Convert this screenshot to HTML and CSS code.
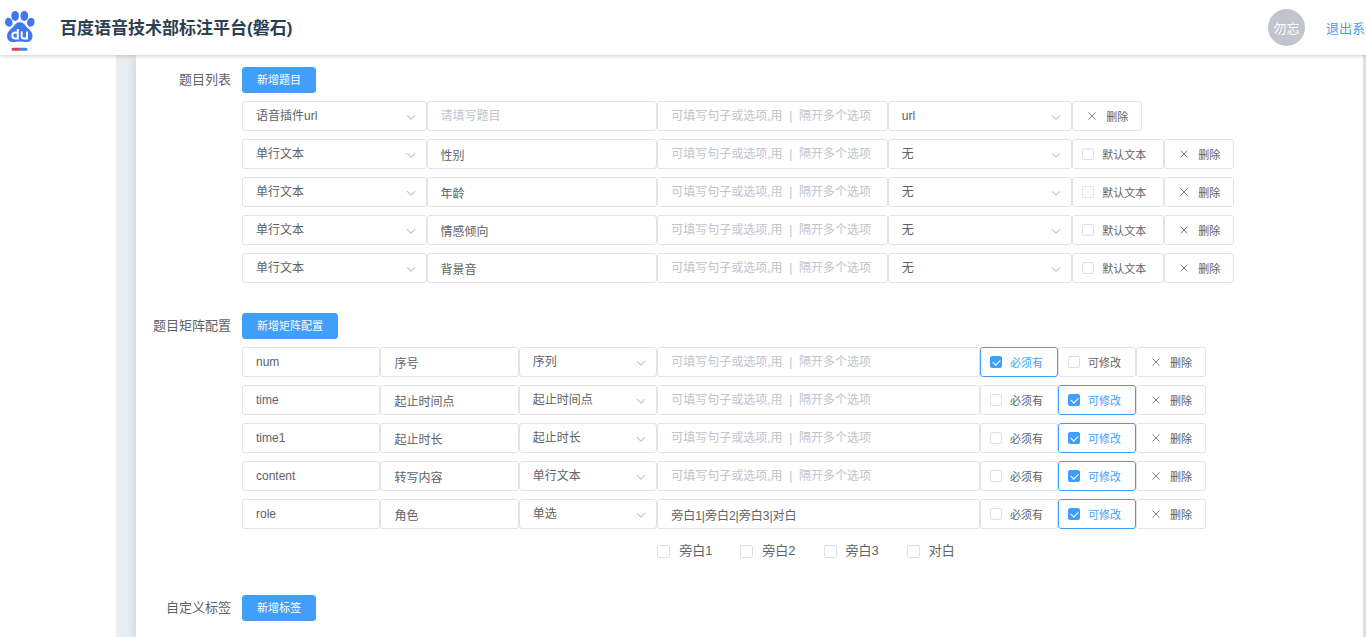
FILE: index.html
```
<!DOCTYPE html>
<html lang="zh-CN">
<head>
<meta charset="utf-8">
<title>百度语音技术部标注平台(磐石)</title>
<link rel="stylesheet" href="styles.css">
</head>
<body>
<header class="header">
  <svg class="logo" viewBox="0 0 32 42" role="img" aria-label="du">
    <g fill="#3f78f0">
      <ellipse cx="4.8" cy="12.3" rx="3.7" ry="4.6" transform="rotate(-14 4.8 12.3)"/>
      <ellipse cx="11.1" cy="5.9" rx="3.8" ry="5"/>
      <ellipse cx="20.3" cy="5.9" rx="3.8" ry="5"/>
      <ellipse cx="26.8" cy="12.3" rx="3.7" ry="4.6" transform="rotate(14 26.8 12.3)"/>
      <path d="M15.8 12.2c3.200 0 4.600 1.900 6.400 4.300 1.900 2.500 6.300 4.700 6.300 9.500 0 3.900-2.500 6.100-6 6.100-2.500 0-4.300-.6-6.700-.6s-4.200.6-6.700.6c-3.500 0-6-2.200-6-6.100 0-4.800 4.400-7 6.300-9.500 1.800-2.400 3.200-4.300 6.400-4.300z"/>
    </g>
    <g fill="none" stroke="#fff" stroke-width="2">
      <path d="M13.800 19v9.400h-2.600a2.900 2.900 0 0 1 0-5.800h2.600"/>
      <path d="M17.700 21.600v4.600q0 2.200 2.200 2.200h3.100v-6.800"/>
    </g>
    <path d="M9 37.800h6.800v3H9a1.500 1.500 0 0 1 0-3z" fill="#d6454d"/>
    <path d="M15.800 37.800h6.200a1.500 1.500 0 0 1 0 3h-6.200z" fill="#4787df"/>
  </svg>
  <h1 class="title">百度语音技术部标注平台(磐石)</h1>
  <div class="user">
    <span class="avatar">勿忘</span>
    <a class="logout" href="#">退出系统</a>
  </div>
</header>
<div class="layout">
  <aside class="sidebar"></aside>
  <main class="panel" id="panel"></main>
</div>
<script src="app.js"></script>
</body>
</html>
```

FILE: styles.css
```
* { box-sizing: border-box; }
html, body { margin: 0; overflow: hidden; }
body {
  display: flex;
  flex-direction: column;
  min-height: 100vh;
  background: #fff;
  color: #606266;
  font-family: "Liberation Sans", "Noto Sans CJK SC", sans-serif;
  font-size: 13px;
}
input, select, button { font-family: inherit; color: inherit; margin: 0; }

.header {
  position: relative;
  z-index: 1;
  display: flex;
  align-items: center;
  min-height: 55px;
  padding-left: 4px;
  background: #fff;
  box-shadow: 0 1px 4px rgba(0, 0, 0, 0.2);
}
.logo { width: 32px; height: 42px; margin-top: 6px; }
.title { margin: 2px 0 0 24px; font-size: 17px; line-height: 24px; color: #2c3e50; }
.user { display: flex; align-items: center; gap: 21px; margin-left: auto; margin-right: -12px; }
.avatar {
  display: flex;
  align-items: center;
  justify-content: center;
  width: 37px;
  height: 37px;
  border-radius: 50%;
  background: #c0c4cc;
  color: #fff;
}
.logout { color: #409eff; text-decoration: none; white-space: nowrap; }

.layout { display: flex; flex: 1; background: #e9eef3; }
.sidebar { width: 116px; background: #fff; }
.panel {
  flex: 1;
  margin-left: 20px;
  padding: 12px 14px 0 0;
  border-right: 3px solid #dcdfe6;
  background: #fff;
  box-shadow: 0 2px 10px rgba(0, 0, 0, 0.16);
}

.section { display: grid; grid-template-columns: 95px 1fr; column-gap: 11px; margin-bottom: 30px; }
.section:last-child { margin-bottom: 0; }
.section-label { text-align: right; line-height: 26px; }
.rows { display: grid; gap: 8px; margin-top: 8px; }
.row { display: grid; grid-template-columns: repeat(24, 1fr); }
.span3 { grid-column: span 3; }
.span4 { grid-column: span 4; }
.span5 { grid-column: span 5; }
.span7 { grid-column: span 7; }
.actions { grid-column: span 8; display: flex; }
.row-list .actions { grid-column: span 6; }

.add {
  display: block;
  height: 26px;
  padding: 0 14px;
  border: 1px solid #409eff;
  border-radius: 3px;
  background: #409eff;
  color: #fff;
  font-size: 11px;
  line-height: 22px;
}
.field, .delete, .check {
  height: 30px;
  border: 1px solid #e0e3e9;
  border-radius: 3px;
  background: #fff;
}
.field { width: 100%; min-width: 0; padding: 0 13px; font-size: 12px; line-height: 28px; outline: 0; }
.field::placeholder { color: #c0c4cc; opacity: 1; line-height: 28px; }
.select { position: relative; }
.select .field { display: block; appearance: none; }
.arrow {
  position: absolute;
  right: 11px;
  top: 13px;
  width: 10px;
  height: 7px;
  pointer-events: none;
}
.delete { display: flex; align-items: center; gap: 10px; width: 70px; padding: 0 0 0 15px; font-size: 11px; }
.cross { width: 8px; height: 8px; }
.check { display: flex; align-items: center; gap: 8px; padding-left: 9px; font-size: 11px; white-space: nowrap; }
.check-wide { width: 92px; }
.check-narrow { width: 78px; }
.check:has(:checked) { border-color: #409eff; color: #409eff; }

.box {
  position: relative;
  flex: none;
  appearance: none;
  width: 12px;
  height: 12px;
  border: 1px solid #dcdfe6;
  border-radius: 2px;
  background: #fff;
}
.box:checked { border-color: #409eff; background: #409eff; }
.box:checked::after {
  content: "";
  position: absolute;
  left: 3px;
  top: 1px;
  width: 4px;
  height: 6px;
  border: solid #fff;
  border-width: 0 1px 1px 0;
  transform: rotate(45deg);
}
.options { grid-column: 10 / -1; display: flex; gap: 28px; line-height: 28px; }
.option { display: flex; align-items: center; gap: 9px; }
.option .box { width: 13px; height: 13px; }
```

FILE: app.js
```
const HINT = '可填写句子或选项,用  |  隔开多个选项';

const input = (span, value, label, placeholder = '') =>
  `<input class="field ${span}" type="text" aria-label="${label}" value="${value}" placeholder="${placeholder}">`;

const select = (span, value, label) => `
  <div class="select ${span}">
    <select class="field" aria-label="${label}"><option>${value}</option></select>
    <svg class="arrow" viewBox="0 0 10 7" aria-hidden="true"><path d="M1 1.200l4 4 4-4" fill="none" stroke="#c0c4cc" stroke-width="1.100"/></svg>
  </div>`;

const check = (kind, text, on) =>
  `<label class="check ${kind}"><input class="box" type="checkbox"${on ? ' checked' : ''}>${text}</label>`;

const remove = `
  <button class="delete" type="button">
    <svg class="cross" viewBox="0 0 8 8" aria-hidden="true"><path d="M.5.5l7 7m0-7l-7 7" stroke="#606266" stroke-width=".8"/></svg>删除
  </button>`;

const listRow = ([type, title, source]) => `
  <div class="row row-list">
    ${select('span4', type, '类型')}
    ${input('span5', title, '题目', '请填写题目')}
    ${input('span5', '', '选项', HINT)}
    ${select('span4', source, '默认值')}
    <div class="actions">${source === 'url' ? '' : check('check-wide', '默认文本', false)}${remove}</div>
  </div>`;

const matrixRow = ([key, name, type, options, required]) => `
  <div class="row">
    ${input('span3', key, '字段')}
    ${input('span3', name, '名称')}
    ${select('span3', type, '类型')}
    ${input('span7', options, '选项', HINT)}
    <div class="actions">${check('check-narrow', '必须有', required)}${check('check-narrow', '可修改', !required)}${remove}</div>
  </div>`;

const section = (label, button, rows) => `
  <section class="section">
    <div class="section-label">${label}</div>
    <div><button class="add" type="button">${button}</button>${rows ? `<div class="rows">${rows}</div>` : ''}</div>
  </section>`;

const list = [
  ['语音插件url', '', 'url'],
  ['单行文本', '性别', '无'],
  ['单行文本', '年龄', '无'],
  ['单行文本', '情感倾向', '无'],
  ['单行文本', '背景音', '无'],
];

const matrix = [
  ['num', '序号', '序列', '', true],
  ['time', '起止时间点', '起止时间点', '', false],
  ['time1', '起止时长', '起止时长', '', false],
  ['content', '转写内容', '单行文本', '', false],
  ['role', '角色', '单选', '旁白1|旁白2|旁白3|对白', false],
];

const options = ['旁白1', '旁白2', '旁白3', '对白']
  .map(text => `<label class="option"><input class="box" type="checkbox">${text}</label>`)
  .join('');

document.getElementById('panel').innerHTML =
  section('题目列表', '新增题目', list.map(listRow).join('')) +
  section('题目矩阵配置', '新增矩阵配置',
    matrix.map(matrixRow).join('') + `<div class="row"><div class="options">${options}</div></div>`) +
  section('自定义标签', '新增标签', '');
```
